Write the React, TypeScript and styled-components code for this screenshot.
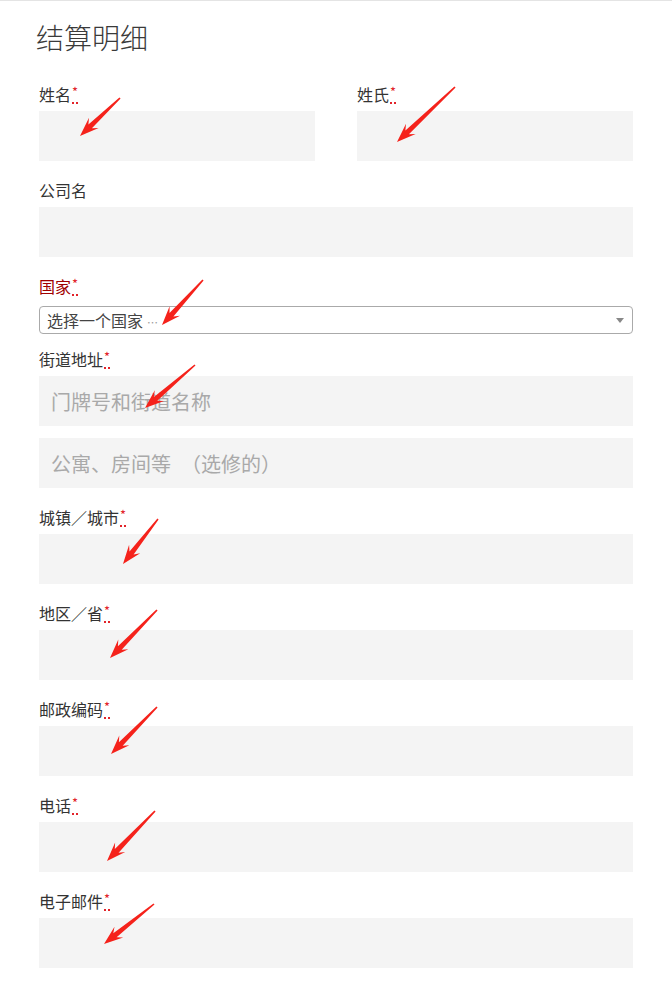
import React from 'react';
import styled, { createGlobalStyle } from 'styled-components';

const GlobalStyle = createGlobalStyle`
  body {
    margin: 0;
    background: #fff;
    font-family: "Noto Sans CJK SC", "Noto Sans", "Liberation Sans", sans-serif;
    color: #333;
  }
`;

const Page = styled.div`
  position: relative;
  width: 672px;
  min-height: 1005px;
  border-top: 1px solid #e4e4e4;
  box-sizing: border-box;
  padding: 0 39px;
`;

const Title = styled.h3`
  margin: 19px 0 28px -3px;
  font-size: 28px;
  line-height: 34px;
  font-weight: 300;
  color: #3a3a3a;
`;

const Row = styled.div`
  display: grid;
  grid-template-columns: 1fr 1fr;
  column-gap: 42px;
`;

const Field = styled.div<{ $gap?: number }>`
  display: flex;
  flex-direction: column;
  margin-bottom: ${(p) => p.$gap ?? 17}px;
`;

const Label = styled.label<{ $invalid?: boolean; $space?: number }>`
  display: block;
  height: 24px;
  font-size: 16px;
  line-height: 24px;
  margin-bottom: ${(p) => p.$space ?? 5}px;
  color: ${(p) => (p.$invalid ? '#a00000' : '#333')};
`;

const Required = styled.abbr`
  color: #e2232a;
  font-size: 13px;
  line-height: 0;
  text-decoration: underline dotted;
  text-decoration-thickness: 2px;
  text-underline-offset: 5px;
  position: relative;
  top: -4px;
  margin-left: 1px;
`;

const Input = styled.input<{ $space?: number }>`
  display: block;
  box-sizing: border-box;
  width: 100%;
  height: 50px;
  margin: 0 0 ${(p) => p.$space ?? 0}px;
  padding: 0 12px;
  border: none;
  outline: none;
  background: #f4f4f4;
  font-family: inherit;
  font-size: 20px;
  color: #333;
  &::placeholder {
    color: #a9a9a9;
  }
`;

const Select = styled.div`
  position: relative;
  box-sizing: border-box;
  height: 28px;
  border: 1px solid #aaa;
  border-radius: 4px;
  padding: 0 24px 0 7px;
  font-size: 16px;
  line-height: 26px;
  color: #444;
  &::after {
    content: '';
    position: absolute;
    right: 8px;
    top: 11px;
    border-style: solid;
    border-width: 5px 4px 0 4px;
    border-color: #888 transparent transparent transparent;
  }
`;

const Ellipsis = styled.span`
  font-size: 11px;
  color: #999;
  margin-left: 4px;
`;

const Overlay = styled.svg`
  position: absolute;
  top: 0;
  left: 0;
  pointer-events: none;
`;

type Pt = [number, number];

const arrows: { tail: Pt; tip: Pt }[] = [
  { tail: [120, 97], tip: [80, 135] },
  { tail: [455, 86], tip: [397, 141] },
  { tail: [203, 279], tip: [162, 324] },
  { tail: [195, 364], tip: [145, 407] },
  { tail: [158, 518], tip: [123, 563] },
  { tail: [157, 609], tip: [110, 657] },
  { tail: [157, 706], tip: [111, 753] },
  { tail: [155, 810], tip: [107, 860] },
  { tail: [154, 903], tip: [104, 943] },
];

function arrowPoints(tail: Pt, tip: Pt) {
  const dx = tail[0] - tip[0];
  const dy = tail[1] - tip[1];
  const len = Math.hypot(dx, dy);
  const ux = dx / len;
  const uy = dy / len;
  const px = -uy;
  const py = ux;
  const at = (u: number, v: number) =>
    `${(tip[0] + ux * u + px * v).toFixed(1)},${(tip[1] + uy * u + py * v).toFixed(1)}`;
  return [
    at(0, 0),
    at(19, 7),
    at(14, 2.6),
    at(len, 0.8),
    at(len, -0.8),
    at(14, -2.6),
    at(19, -7),
  ].join(' ');
}

function Arrows() {
  return (
    <Overlay width={672} height={1005} viewBox="0 0 672 1005">
      {arrows.map((a, i) => (
        <polygon key={i} points={arrowPoints(a.tail, a.tip)} fill="#f5221b" />
      ))}
    </Overlay>
  );
}

function Req() {
  return <Required title="必填">*</Required>;
}

export default function App() {
  return (
    <>
      <GlobalStyle />
      <Page>
        <Title>结算明细</Title>
        <Row>
          <Field>
            <Label>姓名<Req /></Label>
            <Input />
          </Field>
          <Field>
            <Label>姓氏<Req /></Label>
            <Input />
          </Field>
        </Row>
        <Field>
          <Label>公司名</Label>
          <Input />
        </Field>
        <Field $gap={13}>
          <Label $invalid $space={8}>国家<Req /></Label>
          <Select>
            选择一个国家<Ellipsis>…</Ellipsis>
          </Select>
        </Field>
        <Field>
          <Label>街道地址<Req /></Label>
          <Input placeholder="门牌号和街道名称" $space={12} />
          <Input placeholder="公寓、房间等　（选修的）" />
        </Field>
        <Field>
          <Label>城镇／城市<Req /></Label>
          <Input />
        </Field>
        <Field>
          <Label>地区／省<Req /></Label>
          <Input />
        </Field>
        <Field>
          <Label>邮政编码<Req /></Label>
          <Input />
        </Field>
        <Field>
          <Label>电话<Req /></Label>
          <Input />
        </Field>
        <Field>
          <Label>电子邮件<Req /></Label>
          <Input />
        </Field>
        <Arrows />
      </Page>
    </>
  );
}
